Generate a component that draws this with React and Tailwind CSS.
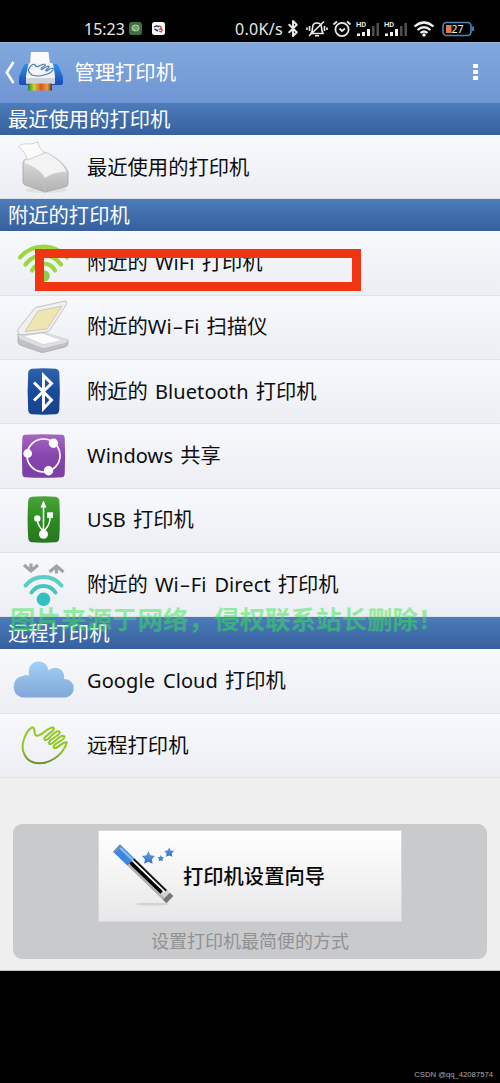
import React from 'react';
import { Bluetooth } from 'lucide-react';

const STAR = 'M0 -6.5 L2.2 -2.4 L6.6 -1.8 L3.5 1.500 L4.2 6 L0 4.2 L-4.2 6 L-3.5 1.500 L-6.6 -1.8 L-2.2 -2.4 Z';

// Latin words run wider than the CJK face they sit in
const Latin = ({ text }) => (
  <span className="font-['Noto_Sans'] text-[20px] tracking-[0.1px]">
    {text.split('-').map((word, i) => (
      <React.Fragment key={i}>
        {i > 0 && <span className="inline-block w-[12px] scale-x-[1.7] text-center">-</span>}
        {word}
      </React.Fragment>
    ))}
  </span>
);

const Label = ({ text }) => (
  <span className="-mt-[2px] text-[20.3px] leading-none [word-spacing:2.5px] whitespace-pre text-[#0c0c0e]">
    {text.split(/([A-Za-z-]+(?: [A-Za-z-]+)*)/).map((part, i) =>
      i % 2 ? <Latin key={i} text={part} /> : part
    )}
  </span>
);

const IconBox = ({ children }) => (
  <svg viewBox="0 0 87 64" className="h-16 w-[87px] shrink-0" fill="none">
    {children}
  </svg>
);

const RecentIcon = () => (
  <IconBox>
    <defs>
      <linearGradient id="side" x1="0" y1="0" x2="0" y2="1">
        <stop offset="0" stopColor="#e4e4e4" />
        <stop offset="1" stopColor="#b2b2b2" />
      </linearGradient>
    </defs>
    <ellipse cx="46" cy="55" rx="21" ry="3" fill="#dfe0e4" />
    <path d="M23 28 Q23 25 26 24 L43 18 Q46 17 49 19 Q64 27 68 37 L68 49 Q68 51 65 52 L45 57 L25 50 Q23 49 23 47 Z" fill="url(#side)" stroke="#a5a5a5" strokeWidth=".8" />
    <path d="M24 28 Q24 25 27 24 L43 18 Q46 17 49 19 Q63 27 67 37 Q54 37 45 43 Q40 34 24 28 Z" fill="#f3f3f3" stroke="#cfcfcf" strokeWidth=".7" />
    <path d="M45 43 L45 57" stroke="#c4c4c4" />
    <path d="M18.5 12 Q22 8 28 9 Q34 9 38 7 Q39 14 45 18 L27 25 Q26 17 18.5 12 Z" fill="#fbfbfb" stroke="#c6c6c6" strokeWidth=".8" />
  </IconBox>
);

const WifiIcon = () => (
  <IconBox>
    <g stroke="#9bd83f" strokeWidth="4.2" strokeLinecap="round">
      <path d="M20 26.5 A31 31 0 0 1 67 26.5" />
      <path d="M25.5 33.5 A22 22 0 0 1 61 33.5" />
      <path d="M32 39.5 A13 13 0 0 1 55 39.5" />
    </g>
    <circle cx="44" cy="45" r="5.8" fill="#8ccd4a" />
  </IconBox>
);

const ScannerIcon = () => (
  <IconBox>
    <path d="M18 39 L18 47 Q18 49 20 50 L40 57 Q42 58 45 57 L65 52 Q68 51 68 48 L68 45 L42 37 Z" fill="#c0c1c4" stroke="#a9aaae" strokeWidth=".8" />
    <path d="M18 40 L42 36 L68 45 Q68 47 65 48 L44 53 Q42 53 40 52 L20 44 Z" fill="#dedfe1" />
    <path d="M23 41 L42 38 L63 45.5 L43 49.5 Z" fill="#fcfcfd" stroke="#c9cacd" strokeWidth=".6" />
    <path d="M18 38 Q17 36 19 33 L34 14 Q35 12 38 12 L65 6 Q68 6 66 10 L50 35 Q49 37 46 37 L20 40 Z" fill="#f0f0f1" stroke="#bcbdbf" strokeWidth=".9" />
    <path d="M25 36.5 L38 16 L62 11 L47 34 Z" fill="#efe5b1" stroke="#cdc9b3" strokeWidth="1" />
  </IconBox>
);

const BluetoothIcon = () => (
  <IconBox>
    <defs>
      <linearGradient id="bt" x1="0" y1="0" x2="0" y2="1">
        <stop offset="0" stopColor="#2f62ae" />
        <stop offset=".5" stopColor="#184a9c" />
        <stop offset="1" stopColor="#164390" />
      </linearGradient>
    </defs>
    <path d="M32 8.7 Q43.5 7.8 55.5 8.7 Q59 9 59.3 13 Q60.4 31 59.3 50 Q59 54 55.5 54.3 Q43.5 55 32 54.3 Q28.5 54 28.2 50 Q27 31 28.2 13 Q28.5 9 32 8.7 Z" fill="url(#bt)" />
    <path d="M34 22.5 L51.500 40 L43.5 48.5 V15.5 L51.5 23.5 L34 40.5" stroke="#fff" strokeWidth="3" />
  </IconBox>
);

const ShareIcon = () => (
  <IconBox>
    <defs>
      <linearGradient id="share" x1="0" y1="0" x2="0" y2="1">
        <stop offset="0" stopColor="#a566c2" />
        <stop offset=".5" stopColor="#8745ad" />
        <stop offset="1" stopColor="#7c3fa4" />
      </linearGradient>
    </defs>
    <path d="M25 10.8 Q43.5 9.8 62 10.8 Q64.5 11 64.7 14 Q65.5 32 64.7 50 Q64.5 53 62 53.2 Q43.5 54.2 25 53.2 Q22.5 53 22.3 50 Q21.5 32 22.3 14 Q22.5 11 25 10.8 Z" fill="url(#share)" />
    <circle cx="43.5" cy="31.5" r="16.5" stroke="#fff" strokeWidth="1.7" />
    <g fill="#fff">
      <circle cx="27.7" cy="29.5" r="4.4" />
      <circle cx="53.5" cy="19.3" r="4.7" />
      <circle cx="48.5" cy="46.7" r="4.7" />
    </g>
  </IconBox>
);

const UsbIcon = () => (
  <IconBox>
    <defs>
      <linearGradient id="usb" x1="0" y1="0" x2="0" y2="1">
        <stop offset="0" stopColor="#4ba43a" />
        <stop offset=".5" stopColor="#2c8c21" />
        <stop offset="1" stopColor="#287621" />
      </linearGradient>
    </defs>
    <path d="M32 8.7 Q43.5 7.8 55.5 8.7 Q59 9 59.3 13 Q60.4 31 59.3 50 Q59 54 55.5 54.3 Q43.5 55 32 54.3 Q28.5 54 28.2 50 Q27 31 28.2 13 Q28.5 9 32 8.7 Z" fill="url(#usb)" />
    <path d="M43.5 18 V44 M43.5 43 Q37.5 38 37.3 31 M43.5 43 Q50 38 50.2 29" stroke="#fff" strokeWidth="1.5" />
    <g fill="#fff">
      <path d="M43.5 12.5 L46.5 19.5 H40.5 Z" />
      <circle cx="43.5" cy="46.3" r="4.5" />
      <circle cx="37.3" cy="30.5" r="3.2" />
      <path d="M47.2 24.3 H53 V30 H47.2 Z" />
    </g>
  </IconBox>
);

const DirectIcon = () => (
  <IconBox>
    <g stroke="#a3a3a3" strokeWidth="3.2">
      <path d="M24 12 L31 18 L38 12 M31 10.5 V18" />
      <path d="M49.5 19 L56.5 13 L63.5 19 M56.5 13 V20.5" />
    </g>
    <g strokeWidth="4" strokeLinecap="round">
      <path d="M25.5 32.5 A23.3 23.3 0 0 1 61.5 32.5" stroke="#5ccfc2" />
      <path d="M31.5 39.5 A14.3 14.3 0 0 1 55.5 39.5" stroke="#45c6c0" />
    </g>
    <circle cx="43.5" cy="46.3" r="6.8" fill="#2fc2c0" />
  </IconBox>
);

const CloudIcon = () => (
  <IconBox>
    <defs>
      <linearGradient id="cloud" x1="0" y1="0" x2="0" y2="1">
        <stop offset="0" stopColor="#a0d2f5" />
        <stop offset="1" stopColor="#82a6d8" />
      </linearGradient>
    </defs>
    <path d="M24 48.5 C10.5 48.5 10.5 28 23 27 Q26 25.5 29 26.5 C26 9 47 8.5 48.5 21.5 C54 16 65.5 19 64 30 C77 30 77 48.5 64 48.5 Z" fill="url(#cloud)" />
  </IconBox>
);

const HandIcon = () => (
  <IconBox>
    <defs>
      <linearGradient id="hand" x1="0" y1="0" x2="0" y2="1">
        <stop offset="0" stopColor="#95cb21" />
        <stop offset=".6" stopColor="#91c520" />
        <stop offset="1" stopColor="#6c8d38" />
      </linearGradient>
    </defs>
    <path d="M67 29.500 C62 43 50 50.5 39 50.3 C25 50 20 37 24 26 C26 20 29 16 32 14.5 C36 14 33 20 36 22.5 C41 24.5 47 14 53 14.5 C58 17 41 24 45 27 C49 28.5 54 16 59.5 18.5 C62 22 46 27 49.5 31 C53 32.5 60 20 64.5 23.5 C66 27 51 31 54 35 C58 36.5 63 27 67 29.5 Z" stroke="url(#hand)" strokeWidth="2" strokeLinejoin="round" />
  </IconBox>
);

const SectionHeader = ({ title }) => (
  <div className="flex h-8 items-center bg-linear-to-b from-[#4c7cba] to-[#375f9d] pb-[2px] pl-2 text-[20.3px] leading-none text-white">
    {title}
  </div>
);

const Row = ({ icon: Icon, label, children }) => (
  <div className="relative flex h-[64.33px] items-center border-b border-[#dfe2ea] bg-linear-to-b from-[#f7f9fd] to-[#eceef3]">
    <Icon />
    <Label text={label} />
    {children}
  </div>
);

const Signal = () => (
  <svg viewBox="0 0 24 18" className="h-[18px] w-6">
    <text x="0" y="7" fontSize="7.500" fontWeight="600" fill="#eee" fontFamily="Roboto, sans-serif">HD</text>
    <g fill="#f2f2f2">
      <path d="M1 13.5 H4 V16 H1 Z M6 12 H9 V16 H6 Z M11 9 H14 V16 H11 Z" />
    </g>
    <path d="M16 6 H18.5 V16 H16 Z M20.5 3 H23 V16 H20.5 Z" fill="#505050" />
  </svg>
);

const StatusBar = () => (
  <div className="flex h-[42px] items-end bg-black pb-1 pl-[84px] text-[#e9e9e9]">
    <span className="w-[45px] font-['Noto_Sans'] text-[16px] leading-[18px]">15:23</span>
    <svg viewBox="0 0 13 13" className="mb-[3px] size-[13px]">
      <rect width="13" height="13" rx="2.5" fill="#3c6d43" />
      <ellipse cx="6.5" cy="6" rx="4" ry="3.5" fill="#9fc48f" />
      <path d="M4 5 L8 8 M6 4 L9 6" stroke="#3c6d43" />
    </svg>
    <svg viewBox="0 0 13 13" className="mb-[3px] ml-[10px] size-[13px]">
      <rect width="13" height="13" rx="2.5" fill="#fafafa" />
      <path d="M2 5 Q5 3 7 5 M2.5 7 L6 9" stroke="#333f55" strokeWidth="1.5" fill="none" />
      <path d="M7 4 Q11 5 8 7 Q12 7 9 10 L7 9" stroke="#d0404f" strokeWidth="1.3" fill="none" />
    </svg>
    <span className="ml-[70px] w-[49px] whitespace-nowrap font-['Noto_Sans'] text-[16px] leading-[18px] tracking-[0.3px]">0.0K/s</span>
    <Bluetooth className="h-[19px] w-[18px]" strokeWidth={2.6} />
    <svg viewBox="0 0 22 18" className="ml-[4px] h-[18px] w-[22px]" fill="none" stroke="#eaeaea" strokeWidth="1.6">
      <path d="M5 13.5 H17 Q15.5 11 15.5 7 Q15 3 11 3 Q6.5 3 6.5 8 Q6.5 11 5 13.5 Z M3 16 L18 1.5 M9 15.8 H13" />
      <path d="M3.5 6 V11 M1 7.5 V10 M18.5 6 V11 M21 7.5 V10" />
    </svg>
    <svg viewBox="0 0 20 18" className="ml-[4px] h-[18px] w-5" fill="none" stroke="#eaeaea" strokeWidth="1.8">
      <circle cx="10" cy="9.5" r="6.6" />
      <path d="M7.5 8.5 L10 11 L13 8.5 M1.5 4.5 L5 1.5 M15 1.5 L18.5 4.5" />
    </svg>
    <div className="ml-[4px] flex gap-1">
      <Signal />
      <Signal />
    </div>
    <svg viewBox="0 0 22 18" className="ml-[5px] h-[18px] w-[22px]" fill="none" stroke="#f2f2f2" strokeWidth="2.2">
      <path d="M1.5 6.5 Q11 -1.5 20.5 6.5 M4.5 10 Q11 4.5 17.5 10 M7.500 13 Q11 10 14.5 13" />
      <circle cx="11" cy="15" r="1.8" fill="#f2f2f2" stroke="none" />
    </svg>
    <svg viewBox="0 0 33 18" className="ml-[7px] h-[18px] w-[33px]">
      <rect x="1" y="2.5" width="28" height="13" rx="3.5" fill="none" stroke="#4c87ba" strokeWidth="1.6" />
      <path d="M31 6.5 V11" stroke="#4c87ba" strokeWidth="1.8" />
      <rect x="4" y="5" width="5.500" height="8" fill="#e77745" />
      <text x="9.5" y="12.8" fontSize="10.5" fill="#eee" fontFamily="Noto Sans, sans-serif">27</text>
    </svg>
  </div>
);

const PrinterLogo = () => (
  <svg viewBox="0 0 64 61" className="h-[61px] w-16" fill="none">
    <defs>
      <linearGradient id="rainbow">
        <stop offset="0" stopColor="#24833a" />
        <stop offset=".25" stopColor="#cbd431" />
        <stop offset=".55" stopColor="#e15027" />
        <stop offset=".8" stopColor="#e8a13e" />
        <stop offset="1" stopColor="#49352c" />
      </linearGradient>
      <linearGradient id="logoSide" x1="0" y1="0" x2="0" y2="1">
        <stop offset="0" stopColor="#2d91e8" />
        <stop offset="1" stopColor="#1c49b5" />
      </linearGradient>
    </defs>
    <path d="M13.5 19 L6.8 29.5 L13.5 40" stroke="#fff" strokeWidth="2.5" />
    <path d="M26 21 H56 Q58 21 59 24 L63 34 V40 Q63 42 61 42 H21 Q19 42 19 40 V34 L23 24 Q24 21 26 21 Z" fill="url(#logoSide)" />
    <path d="M31 9 H48.5 L50 21 H30 Z" fill="#fafafa" />
    <path d="M30 20 H51 Q53 20 53.5 23 L55 33 V39 Q55 41 53 41 H28 Q26 41 26 39 V33 L28 23 Q28.5 20 30 20 Z" fill="#f2f4f8" />
    <path d="M26 35 H55 V39 Q55 41 53 41 H28 Q26 41 26 39 Z" fill="#ccd2dc" />
    <path d="M28 40.5 H52 V47.5 H28 Z" fill="url(#rainbow)" />
    <path d="M44 32 Q38 34 32 32 Q26 28 30 24 Q33 20 35 22 Q36 25 40 22.500 Q46 20 45 22.5 Q39 26 42 26.5 Q50 21 49 24.5 Q44 28 47 28 Q54 23 53 27 Q50 31 44 32" stroke="#4d79b4" strokeWidth="1.2" />
  </svg>
);

const AppBar = () => (
  <div className="flex h-[61px] items-center justify-between border-t border-[#9fb9df] bg-linear-to-b from-[#81a9dd] to-[#7095d4] pr-[22px]">
    <div className="flex items-center">
      <PrinterLogo />
      <span className="ml-[10.5px] pb-[3px] text-[20.3px] leading-none text-white">管理打印机</span>
    </div>
    <div className="mb-[2px] flex flex-col gap-[2px]">
      <i className="h-[4px] w-[5px] bg-white" />
      <i className="h-[4px] w-[5px] bg-white" />
      <i className="h-[4px] w-[5px] bg-white" />
    </div>
  </div>
);

const Wand = () => (
  <svg viewBox="0 0 85 92" className="h-[91px] w-[84px]" fill="none">
    <defs>
      <linearGradient id="star" x1="0" y1="0" x2="0" y2="1">
        <stop offset="0" stopColor="#6ba0e6" />
        <stop offset="1" stopColor="#2e6cc5" />
      </linearGradient>
    </defs>
    <ellipse cx="54" cy="75" rx="17" ry="1.5" fill="#d4d4d4" />
    <g transform="translate(18.500 19) rotate(44)">
      <rect x="-1" y="-5" width="75" height="10" fill="#d2d2d2" />
      <rect x="19" y="-5" width="46" height="2.2" fill="#151515" />
      <rect x="19" y="-2.8" width="46" height="1.6" fill="#fff" />
      <rect x="19" y="-1.2" width="44" height="3.700" fill="#000" />
      <rect x="19" y="2.5" width="50" height="2.5" fill="#b0b0b0" />
      <rect x="-1" y="-5" width="20" height="10" fill="#3c86e0" />
      <rect x="1" y="-4" width="18" height="2.5" fill="#86bbf5" />
      <rect x="-1" y="-5" width="2.5" height="10" fill="#718eae" />
      <rect x="69" y="-5" width="5" height="10" fill="#777" />
    </g>
    <path d={STAR} transform="translate(50 28)" fill="url(#star)" />
    <path d={STAR} transform="translate(62.5 28.500) scale(.5)" fill="url(#star)" />
    <path d={STAR} transform="translate(71 22.5) scale(.75)" fill="url(#star)" />
  </svg>
);

const Wizard = () => (
  <div className="h-[193.5px] border-b border-[#c5c5c5] bg-[#efefef] px-[13px] pt-[46px]">
    <div className="flex h-[135px] flex-col items-center rounded-[9px] bg-[#c9cacc] pt-[6px]">
      <button className="flex h-[92px] w-[304px] items-center border border-[#d8d8da] bg-linear-to-b from-white to-[#e8e8ea]">
        <Wand />
        <span className="pb-[2px] text-[20.3px] leading-none font-medium text-[#080808]">打印机设置向导</span>
      </button>
      <span className="mt-[9px] text-[18px] leading-none text-[#919193]">设置打印机最简便的方式</span>
    </div>
  </div>
);

export default function App() {
  return (
    <div className="relative flex h-[1083px] w-[500px] flex-col overflow-hidden bg-black font-['Noto_Sans_CJK_SC',sans-serif]">
      <StatusBar />
      <AppBar />
      <SectionHeader title="最近使用的打印机" />
      <Row icon={RecentIcon} label="最近使用的打印机" />
      <SectionHeader title="附近的打印机" />
      <Row icon={WifiIcon} label="附近的 WiFi 打印机">
        <div className="absolute top-[18px] left-[35px] z-10 h-[42px] w-[326px] border-[9.5px] border-[#ef3512]" />
      </Row>
      <Row icon={ScannerIcon} label="附近的Wi-Fi 扫描仪" />
      <Row icon={BluetoothIcon} label="附近的 Bluetooth 打印机" />
      <Row icon={ShareIcon} label="Windows 共享" />
      <Row icon={UsbIcon} label="USB 打印机" />
      <Row icon={DirectIcon} label="附近的 Wi-Fi Direct 打印机" />
      <SectionHeader title="远程打印机" />
      <Row icon={CloudIcon} label="Google Cloud 打印机" />
      <Row icon={HandIcon} label="远程打印机" />
      <Wizard />
      <div className="flex flex-1 items-end justify-end pr-[7px] pb-[3px]">
        <span className="font-['Liberation_Sans'] text-[7.7px] leading-[11px] text-[#aaa]">CSDN @qq_42087574</span>
      </div>
      <div className="absolute top-[605px] left-[10px] text-[25.5px] leading-[25px] font-bold whitespace-nowrap text-[#37e552]/50">
        图片来源于网络，侵权联系站长删除！
      </div>
    </div>
  );
}
